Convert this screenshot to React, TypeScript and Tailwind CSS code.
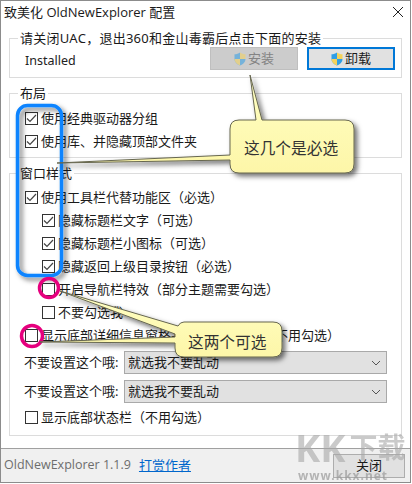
import React from "react";

const cjk = "font-['Noto_Sans','Noto_Sans_CJK_SC',sans-serif]";

function Check({ checked, label }: { checked?: boolean; label: string }) {
  return (
    <div className="flex h-[23px] items-center gap-[3px] whitespace-nowrap text-[13px] text-[#1a1a1a]">
      <span className="flex h-[13px] w-[13px] shrink-0 items-center justify-center border border-[#333]">
        {checked && (
          <svg width="11" height="11" viewBox="0 0 11 11" fill="none">
            <path d="M1 5.5 L4 8.5 L10 2" stroke="#444" strokeWidth="1.2" />
          </svg>
        )}
      </span>
      <span>{label}</span>
    </div>
  );
}

function Shield({ dim }: { dim?: boolean }) {
  return (
    <svg width="12" height="14" viewBox="0 0 12 14" opacity={dim ? 0.55 : 1}>
      <path d="M6 0.5 C4.5 1.6 2.5 2.2 0.5 2.3 V7 C0.5 10 3 12.5 6 13.5 Z" fill="#2f9ee6" />
      <path d="M6 0.5 C7.5 1.6 9.5 2.2 11.5 2.3 V7 H6 Z" fill="#f4d25a" />
      <path d="M0.5 7 H6 V13.5 C3 12.5 0.5 10 0.5 7 Z" fill="#f4d25a" />
      <path d="M6 7 H11.5 C11.5 10 9 12.5 6 13.5 Z" fill="#2f9ee6" />
    </svg>
  );
}

function Group({ title, children, className }: { title: React.ReactNode; children: React.ReactNode; className?: string }) {
  return (
    <fieldset className={`mr-[8px] ml-[8px] border border-[#dcdcdc] ${className ?? ""}`}>
      <legend className="ml-[8px] px-[2px] text-[13px] leading-[16px] whitespace-nowrap text-[#1a1a1a]">{title}</legend>
      {children}
    </fieldset>
  );
}

function Select({ label }: { label: string }) {
  return (
    <div className="flex h-[23px] items-center whitespace-nowrap text-[13px] text-[#1a1a1a]">
      <span className="w-[114px] pl-[14px]">{label}</span>
      <div className="flex h-[23px] w-[263px] items-center justify-between border border-[#a9a9a9] bg-[#e1e1e1] pr-[5px] pl-[3px]">
        <span>就选我不要乱动</span>
        <svg width="10" height="6" viewBox="0 0 10 6" fill="none">
          <path d="M1 1 L5 5 L9 1" stroke="#555" strokeWidth="1" />
        </svg>
      </div>
    </div>
  );
}

export default function App() {
  return (
    <div className={`relative h-[484px] w-[412px] overflow-hidden bg-white ${cjk}`}>
      <div className="flex h-[483px] w-[411px] flex-col border border-[#8c8c8c] bg-white">
        {/* Title bar */}
        <div className="flex h-[23px] shrink-0 items-center justify-between pr-[4px] pl-[3px] text-[13px] text-[#1a1a1a]">
          <span className="font-['Open_Sans','Noto_Sans_CJK_SC',sans-serif]">致美化 OldNewExplorer 配置</span>
          <svg width="12" height="12" viewBox="0 0 12 12" fill="none" className="mr-[2px] -translate-y-[1px]">
            <path d="M1 1 L11 11 M11 1 L1 11" stroke="#222" strokeWidth="1" />
          </svg>
        </div>

        {/* Body */}
        <div className="flex flex-1 flex-col pt-[6px]">
          <Group title={<span className="tracking-[0.25px]">请关闭UAC，退出360和金山毒霸后点击下面的安装</span>}>
            <div className="flex h-[31px] items-start pt-[1px] pr-[6px] pl-[15px]">
              <span className="flex-1 pt-[5px] text-[12.5px] leading-[18px] text-[#222]">Installed</span>
              <button className="mr-[9px] flex h-[23px] w-[88px] items-center justify-center gap-[2px] border border-[#bfbfbf] bg-[#cccccc] text-[13px] text-[#838383]">
                <Shield dim />
                安装
              </button>
              <button className="flex h-[23px] w-[88px] items-center justify-center gap-[2px] border-2 border-[#0078d7] bg-[#e1e1e1] text-[13px] text-[#1a1a1a]">
                <Shield />
                卸载
              </button>
            </div>
          </Group>

          <Group title="布局" className="mt-[7px]">
            <div className="pt-[6px] pb-[4px] pl-[15px]">
              <Check checked label="使用经典驱动器分组" />
              <Check checked label="使用库、并隐藏顶部文件夹" />
            </div>
          </Group>

          <Group title="窗口样式" className="mt-[7px]">
            <div className="pt-[5px] pl-[15px]">
              <Check checked label="使用工具栏代替功能区（必选）" />
              <div className="pl-[17px]">
                <Check checked label="隐藏标题栏文字（可选）" />
                <Check checked label="隐藏标题栏小图标（可选）" />
                <Check checked label="隐藏返回上级目录按钮（必选）" />
                <Check label="开启导航栏特效（部分主题需要勾选）" />
                <Check label="不要勾选我" />
              </div>
              <Check label="显示底部详细信息窗格并且隐藏状态栏（不用勾选）" />
            </div>
            <div className="mt-[4px] flex flex-col gap-[6px]">
              <Select label="不要设置这个哦:" />
              <Select label="不要设置这个哦:" />
            </div>
            <div className="pt-[3px] pb-[6px] pl-[15px]">
              <Check label="显示底部状态栏（不用勾选）" />
            </div>
          </Group>

          {/* Footer */}
          <div className="mt-auto flex h-[34px] items-center border-t border-[#a0a0a0] bg-[#f0f0f0] pr-[5px] pl-[3px]">
            <span className="font-['Open_Sans',sans-serif] text-[12.5px] text-[#6d6d6d]">OldNewExplorer 1.1.9</span>
            <a className="ml-[8px] text-[13px] text-[#0066cc] underline">打赏作者</a>
            <button className="ml-auto h-[24px] w-[72px] border border-[#adadad] bg-[#e1e1e1] text-[13px] text-[#1a1a1a]">关闭</button>
          </div>
        </div>
      </div>

      {/* Annotation overlay */}
      <svg className="absolute top-0 left-0" width="412" height="484" viewBox="0 0 412 484">
        <defs>
          <filter id="sh" x="-20%" y="-20%" width="150%" height="150%">
            <feDropShadow dx="3" dy="3" stdDeviation="2.5" floodColor="#000" floodOpacity="0.55" />
          </filter>
          <linearGradient id="yl" x1="0" y1="0" x2="0" y2="1">
            <stop offset="0" stopColor="#ffffc4" />
            <stop offset="1" stopColor="#fdf6a8" />
          </linearGradient>
        </defs>
        <rect x="17.5" y="105.5" width="44" height="170" rx="10" fill="none" stroke="#0a84ff" strokeWidth="3.5" filter="url(#sh)" />
        <circle cx="49" cy="288" r="9.5" fill="none" stroke="#e6007e" strokeWidth="3.5" />
        <circle cx="32" cy="336" r="10.5" fill="none" stroke="#e6007e" strokeWidth="3.5" />
        <path
          d="M239 120 H256 L250 75 L262 120 H345 Q354 120 354 129 V164 Q354 173 345 173 H239 Q230 173 230 164 V160 L57 163 L230 155 V129 Q230 120 239 120 Z"
          fill="url(#yl)"
          stroke="#66664f"
          strokeWidth="1"
          filter="url(#sh)"
        />
        <path
          d="M184 322 H273 Q282 322 282 331 V348 Q282 357 273 357 H184 Q175 357 175 348 V343 L40 342 L175 337 V334 L60 291 L178 326 Q180 322 184 322 Z"
          fill="url(#yl)"
          stroke="#66664f"
          strokeWidth="1"
          filter="url(#sh)"
        />
      </svg>
      <span className="absolute top-[138px] left-[244px] text-[15.7px] leading-[20px] whitespace-nowrap text-[#333]">这几个是必选</span>
      <span className="absolute top-[332px] left-[188px] text-[15.7px] leading-[20px] whitespace-nowrap text-[#333]">这两个可选</span>

      {/* Watermark */}
      <span className="absolute top-[425px] left-[295px] flex items-center font-bold leading-[44px] whitespace-nowrap text-[#a8a8a8] opacity-60">
        <span className="text-[38px]">KK</span>
        <span className="ml-[4px] text-[28px]">下载</span>
      </span>
      <span className="absolute top-[469px] left-[298px] text-[12px] leading-[14px] font-bold tracking-[1px] whitespace-nowrap text-[#9a9a9a] opacity-70">www.kkx.net</span>
    </div>
  );
}
